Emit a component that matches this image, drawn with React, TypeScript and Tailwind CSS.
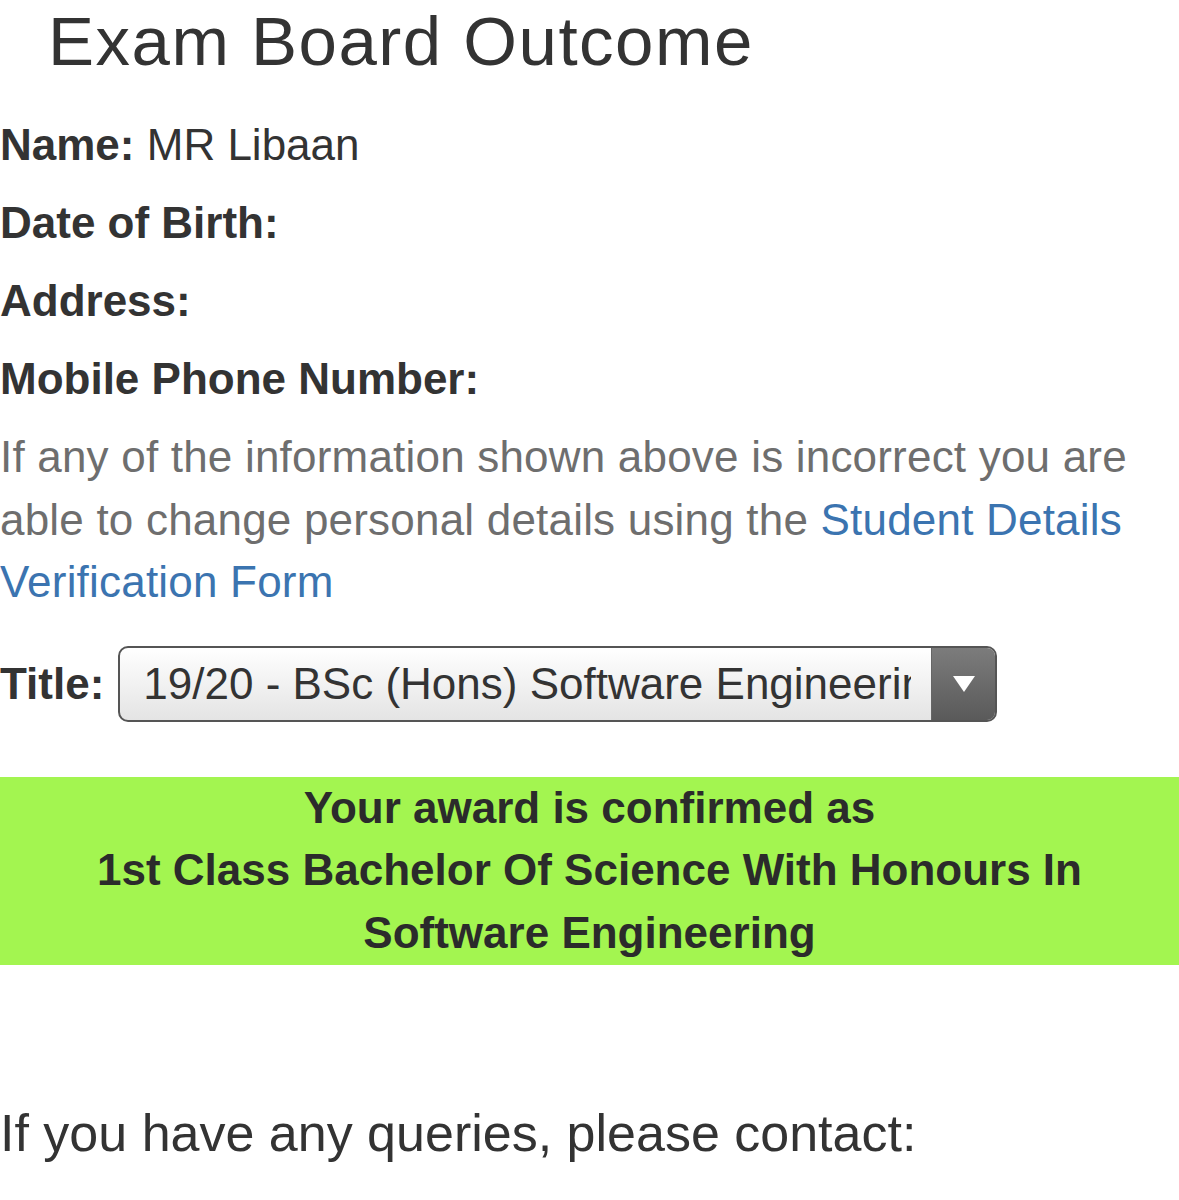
const fields = [
  { label: 'Name:', value: 'MR Libaan' },
  { label: 'Date of Birth:', value: '' },
  { label: 'Address:', value: '' },
  { label: 'Mobile Phone Number:', value: '' },
];

export default function App() {
  return (
    <div className="min-h-[1200px] bg-white text-[#333] font-['Liberation_Sans',Arial,sans-serif]">
      <h1 className="pt-[2px] pl-[48px] text-[69px] leading-[80px] font-normal tracking-[1.5px]">Exam Board Outcome</h1>

      <div className="mt-[32px]">
        {fields.map((f) => (
          <p key={f.label} className="mb-4 text-[44px] leading-[62px]">
            <span className="font-bold">{f.label}</span> {f.value}
          </p>
        ))}
      </div>

      <p className="mt-[2px] text-[44px] leading-[62.5px] tracking-[0.2px] text-[#6e6e6e]">
        If any of the information shown above is incorrect you are able to change personal details using the{' '}
        <a href="#" className="text-[#3b74b0]">Student Details Verification Form</a>
      </p>

      {/* course picker */}
      <div className="mt-[32px] flex items-center gap-[14px]">
        <span className="text-[44px] font-bold leading-[62px]">Title:</span>
        <div className="flex h-[76px] w-[879px] overflow-hidden rounded-[10px] border-2 border-[#555] bg-gradient-to-b from-white to-[#e4e4e4]">
          <div className="min-w-0 flex-1 pl-[23px] pr-[20px]">
            <div className="overflow-hidden whitespace-nowrap text-[44px] leading-[72px] text-[#333]">
              19/20 - BSc (Hons) Software Engineering
            </div>
          </div>
          <div className="flex w-[64px] items-center justify-center border-l border-[#666] bg-gradient-to-b from-[#7c7c7c] to-[#5a5a5a]">
            <svg width="26" height="20" viewBox="0 0 26 20">
              <path d="M2 2h22L13 18z" fill="#fff" />
            </svg>
          </div>
        </div>
      </div>

      <div className="mt-[55px] bg-[#a3f550] text-center text-[44px] font-bold leading-[62.7px] text-[#2b2b2b]">
        <p>Your award is confirmed as</p>
        <p className="px-[90px]">1st Class Bachelor Of Science With Honours In Software Engineering</p>
      </div>

      <p className="mt-[137px] text-[52px] leading-[62px]">If you have any queries, please contact:</p>
    </div>
  );
}
